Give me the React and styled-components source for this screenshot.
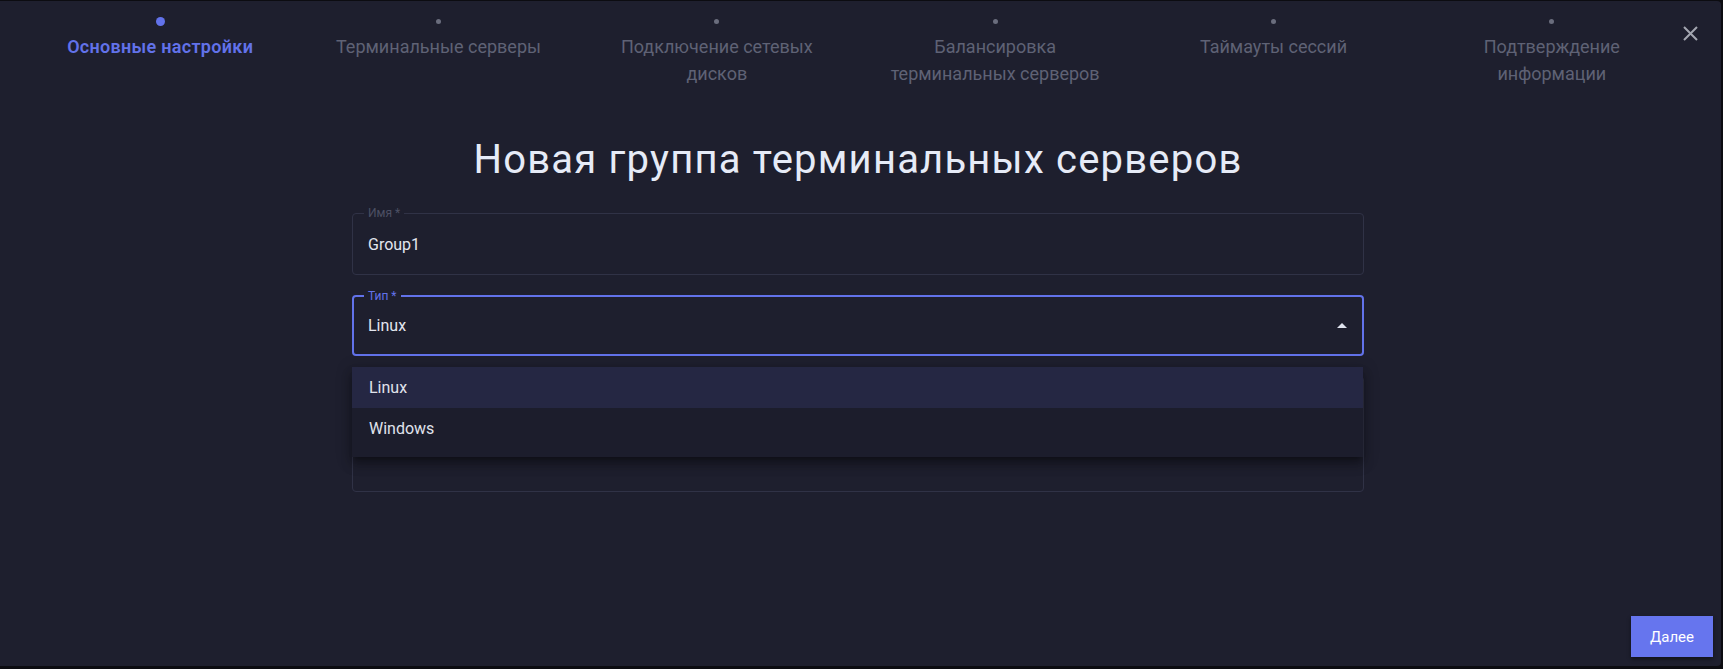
import React from 'react';
import styled, { createGlobalStyle } from 'styled-components';

const GlobalStyle = createGlobalStyle`
  body {
    margin: 0;
    background: #0c0c11;
    font-family: Roboto, "Noto Sans", sans-serif;
  }
`;

const Dialog = styled.div`
  position: relative;
  width: 1721px;
  height: 665px;
  margin-top: 1px;
  background: #1e1f2e;
  border-radius: 0 4px 4px 0;
  display: flex;
  flex-direction: column;
`;

const CloseButton = styled.button`
  position: absolute;
  top: 24px;
  right: 22px;
  width: 17px;
  height: 17px;
  padding: 0;
  border: none;
  background: none;
  color: #a3a6b0;
  cursor: pointer;
  display: flex;
`;

const Stepper = styled.div`
  display: grid;
  grid-template-columns: repeat(6, 1fr);
  padding: 16px 30px 0 21px;
`;

const Step = styled.div`
  display: flex;
  flex-direction: column;
  align-items: center;
  text-align: center;
`;

const DotSlot = styled.div`
  height: 9px;
  margin-bottom: 7px;
  display: flex;
  align-items: center;
  justify-content: center;
`;

const Dot = styled.span`
  width: ${p => (p.$active ? 9 : 5)}px;
  height: ${p => (p.$active ? 9 : 5)}px;
  border-radius: 50%;
  background: ${p => (p.$active ? '#6272ea' : '#6a6d7d')};
`;

const StepLabel = styled.div`
  font-size: 18px;
  line-height: 27px;
  white-space: pre-line;
  font-weight: ${p => (p.$active ? 600 : 400)};
  letter-spacing: ${p => (p.$active ? '0.3px' : '0')};
  color: ${p => (p.$active ? '#6272ea' : '#5f6275')};
`;

const Main = styled.div`
  display: flex;
  flex-direction: column;
  align-items: center;
  padding-right: 5px;
`;

const Title = styled.h1`
  margin: 49px 0 0;
  font-size: 40px;
  line-height: 48px;
  font-weight: 400;
  letter-spacing: 1.2px;
  color: #e6ebf7;
`;

const Form = styled.div`
  position: relative;
  width: 1012px;
  margin-top: 29px;
  display: flex;
  flex-direction: column;
  gap: 20px;
`;

const Field = styled.div`
  position: relative;
  box-sizing: border-box;
  height: ${p => p.$height}px;
  border: ${p => (p.$focused ? '2px solid #6272ea' : '1px solid #303246')};
  border-radius: 4px;
  padding: 0 ${p => (p.$focused ? 14 : 15)}px;
  display: flex;
  align-items: center;
`;

const FieldLabel = styled.span`
  position: absolute;
  top: -8px;
  left: ${p => (p.$focused ? 10 : 11)}px;
  padding: 0 4px;
  background: #1e1f2e;
  font-size: 12px;
  line-height: 14px;
  color: ${p => (p.$focused ? '#6272ea' : '#4c4f63')};
`;

const Value = styled.span`
  font-size: 16px;
  color: #e3e6ef;
`;

const Arrow = styled.span`
  margin-left: auto;
  margin-right: 1px;
  width: 0;
  height: 0;
  border-left: 5px solid transparent;
  border-right: 5px solid transparent;
  border-bottom: 5px solid #dfe3ee;
`;

const Menu = styled.ul`
  position: absolute;
  top: 154px;
  left: 0;
  right: 1px;
  margin: 0;
  padding: 0 0 8px;
  list-style: none;
  background: #1c1d2c;
  box-shadow: 0 5px 5px -3px rgba(0, 0, 0, 0.3), 0 8px 10px 1px rgba(0, 0, 0, 0.2),
    0 3px 14px 2px rgba(0, 0, 0, 0.18);
`;

const MenuItem = styled.li`
  height: 41px;
  padding: 0 17px;
  display: flex;
  align-items: center;
  font-size: 16px;
  color: #e0e3ec;
  background: ${p => (p.$selected ? '#252743' : 'transparent')};
`;

const Footer = styled.div`
  margin-top: auto;
  display: flex;
  justify-content: flex-end;
  padding: 0 8px 9px 0;
`;

const NextButton = styled.button`
  width: 82px;
  height: 41px;
  border: none;
  background: #6675ee;
  color: #ffffff;
  font-family: Roboto, sans-serif;
  font-size: 15px;
  box-shadow: 0 2px 4px rgba(0, 0, 0, 0.45);
  cursor: pointer;
`;

const steps = [
  'Основные настройки',
  'Терминальные серверы',
  'Подключение сетевых\nдисков',
  'Балансировка\nтерминальных серверов',
  'Таймауты сессий',
  'Подтверждение\nинформации',
];

const options = ['Linux', 'Windows'];

const App = () => {
  const current = 0;

  return (
    <>
      <GlobalStyle />
      <Dialog>
        <CloseButton aria-label="Закрыть">
          <svg width="17" height="17" viewBox="0 0 17 17">
            <path d="M2 2L15 15M15 2L2 15" stroke="currentColor" strokeWidth="2" />
          </svg>
        </CloseButton>

        <Stepper>
          {steps.map((label, i) => (
            <Step key={label}>
              <DotSlot>
                <Dot $active={i === current} />
              </DotSlot>
              <StepLabel $active={i === current}>{label}</StepLabel>
            </Step>
          ))}
        </Stepper>

        <Main>
          <Title>Новая группа терминальных серверов</Title>
          <Form>
            <Field $height={62}>
              <FieldLabel>Имя *</FieldLabel>
              <Value>Group1</Value>
            </Field>
            <Field $height={61} $focused>
              <FieldLabel $focused>Тип *</FieldLabel>
              <Value>Linux</Value>
              <Arrow />
            </Field>
            <Field $height={116} />

            <Menu>
              {options.map(opt => (
                <MenuItem key={opt} $selected={opt === 'Linux'}>
                  {opt}
                </MenuItem>
              ))}
            </Menu>
          </Form>
        </Main>

        <Footer>
          <NextButton>Далее</NextButton>
        </Footer>
      </Dialog>
    </>
  );
};

export default App;
